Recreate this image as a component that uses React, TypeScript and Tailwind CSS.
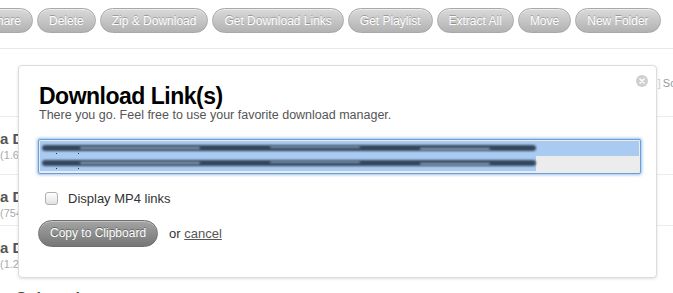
const toolbar = ["Share", "Delete", "Zip & Download", "Get Download Links", "Get Playlist", "Extract All", "Move", "New Folder"];

const rows = [
  { name: "a Documents", size: "(1.6 GB)", h: "h-[58px]" },
  { name: "a Downloads", size: "(754 MB)", h: "h-[51px]" },
  { name: "a Drafts", size: "(1.2 GB)", h: "h-[59px]" },
];

function ToolButton({ label }: { label: string }) {
  return (
    <button className="h-[25px] shrink-0 rounded-full border border-[#a8a8a8] bg-gradient-to-b from-[#dadada] to-[#b2b2b2] px-[11px] text-[12px] leading-none text-white shadow-[inset_0_1px_0_rgba(255,255,255,0.5)] [text-shadow:0_-1px_0_rgba(0,0,0,0.25)]">
      {label}
    </button>
  );
}

// a selected line of link text, scrambled like in the screenshot
function BlurredLine({ selection }: { selection: string }) {
  return (
    <div className={`relative h-[15px] ${selection} bg-[#a9caf1]`}>
      <div className="absolute left-[2px] top-[4px] h-[6px] w-[494px] rounded-full bg-[#34465b] blur-[1px]" />
      <div className="absolute left-[40px] top-[6px] h-[2px] w-[120px] rounded-full bg-[#8fa8c4] blur-[1px]" />
      <div className="absolute left-[230px] top-[5px] h-[2px] w-[90px] rounded-full bg-[#7e98b5] blur-[1px]" />
      <div className="absolute left-[380px] top-[7px] h-[2px] w-[70px] rounded-full bg-[#8fa8c4] blur-[1px]" />
      <div className="absolute left-[16px] top-[12px] h-[1px] w-[1px] bg-[#333]" />
      <div className="absolute left-[38px] top-[12px] h-[1px] w-[1px] bg-[#333]" />
    </div>
  );
}

export default function App() {
  return (
    <div className="relative h-[293px] w-[673px] overflow-hidden bg-white font-['Liberation_Sans',Arial,sans-serif]">
      {/* page behind the dialog */}
      <div className="flex h-[49px] items-start gap-[4px] border-b border-[#e8e8e8] pt-[8px] -ml-[23px]">
        {toolbar.map((t) => (
          <ToolButton key={t} label={t} />
        ))}
      </div>
      <div className="flex h-[67px] items-start justify-end pt-[26px] -mr-[10px]">
        <span className="text-[11px] text-[#999]">
          <span className="mr-[2px] text-[#ccc]">]</span>Sort
        </span>
      </div>
      {rows.map((r) => (
        <div key={r.name} className={`${r.h} border-t border-[#ececec] pt-[13px]`}>
          <div className="whitespace-nowrap text-[15px] font-bold leading-[18px] text-[#555]">{r.name}</div>
          <div className="whitespace-nowrap text-[11px] leading-[14px] text-[#aaa]">{r.size}</div>
        </div>
      ))}
      <div className="pl-[16px] pt-[5px] text-[16px] font-bold leading-[20px] text-[#444]">Subtotal</div>

      {/* dialog */}
      <div className="absolute left-[18px] top-[65px] h-[213px] w-[639px] rounded-[4px] border border-[#dcdcdc] bg-white pl-[19px] pr-[15px] pt-[16px] shadow-[0_1px_3px_rgba(0,0,0,0.12)]">
        <div className="absolute right-[8px] top-[9px] flex h-[12px] w-[12px] items-center justify-center rounded-full bg-[#cfcfcf]">
          <svg width="6" height="6" viewBox="0 0 6 6">
            <path d="M1 1L5 5M5 1L1 5" stroke="white" strokeWidth="1.6" strokeLinecap="round" />
          </svg>
        </div>
        <h1 className="pl-[1px] text-[23px] font-bold leading-[28px] tracking-[-0.5px] text-black">Download Link(s)</h1>
        <p className="-mt-[2px] pl-[1px] text-[12.5px] leading-[15px] text-[#555]">
          There you go. Feel free to use your favorite download manager.
        </p>
        <div className="mt-[16px] h-[35px] overflow-hidden rounded-[2px] border border-[#6a9fd8] bg-[#ececec] p-[1px] shadow-[0_0_3px_1px_rgba(110,165,230,0.7)]">
          <BlurredLine selection="w-full" />
          <BlurredLine selection="w-[496px]" />
        </div>
        <label className="mt-[15px] flex items-center gap-[10px] pl-[7px]">
          <span className="h-[13px] w-[13px] rounded-[3px] border border-[#b0b0b0] bg-gradient-to-b from-white to-[#e2e2e2]" />
          <span className="text-[13px] text-[#333]">Display MP4 links</span>
        </label>
        <div className="mt-[11px] flex items-center gap-[11px]">
          <button className="h-[27px] rounded-full border border-[#6e6e6e] bg-gradient-to-b from-[#a4a4a4] to-[#767676] px-[11px] text-[12px] leading-none text-white shadow-[inset_0_1px_0_rgba(255,255,255,0.35)] [text-shadow:0_-1px_0_rgba(0,0,0,0.35)]">
            Copy to Clipboard
          </button>
          <span className="pt-[2px] text-[13px] text-[#333]">
            or <a className="text-[#555] underline">cancel</a>
          </span>
        </div>
      </div>
    </div>
  );
}
